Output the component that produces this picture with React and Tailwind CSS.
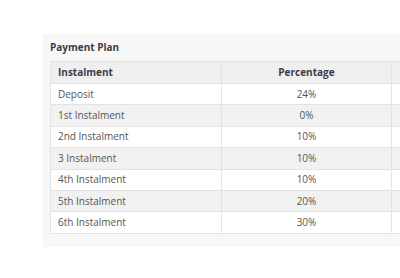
import React from "react";

const rows = [
  ["Deposit", "24%"],
  ["1st Instalment", "0%"],
  ["2nd Instalment", "10%"],
  ["3 Instalment", "10%"],
  ["4th Instalment", "10%"],
  ["5th Instalment", "20%"],
  ["6th Instalment", "30%"],
];

export default function App() {
  return (
    <div
      className="w-[400px] h-[278px] overflow-hidden bg-white"
      style={{ fontFamily: '"Open Sans", "Noto Sans", sans-serif' }}
    >
      <div className="ml-[43px] mt-[34px] w-[420px] h-[213px] bg-[#f7f7f7] pl-[7px] pt-[7px]">
        <h2 className="text-[10px] leading-[12px] font-bold text-[#3d3d4a] mb-[8px]">Payment Plan</h2>
        <table className="border-collapse text-[10px] text-[#555]">
          <thead>
            <tr className="bg-[#efefef] h-[22px]">
              <th className="w-[171px] border border-[#e3e3e3] text-left pl-[7px] font-bold text-[#3d3d4a]">Instalment</th>
              <th className="w-[170px] border border-[#e3e3e3] text-center font-bold text-[#3d3d4a]">Percentage</th>
              <th className="w-[60px] border border-[#e3e3e3]"></th>
            </tr>
          </thead>
          <tbody>
            {rows.map(([a, b], i) => (
              <tr key={a} className={(i % 2 === 0 ? "bg-white" : "bg-[#f1f1f1]") + " h-[21.4px]"}>
                <td className="border border-[#e3e3e3] pl-[7px]">{a}</td>
                <td className="border border-[#e3e3e3] text-center">{b}</td>
                <td className="border border-[#e3e3e3]"></td>
              </tr>
            ))}
          </tbody>
        </table>
      </div>
    </div>
  );
}
